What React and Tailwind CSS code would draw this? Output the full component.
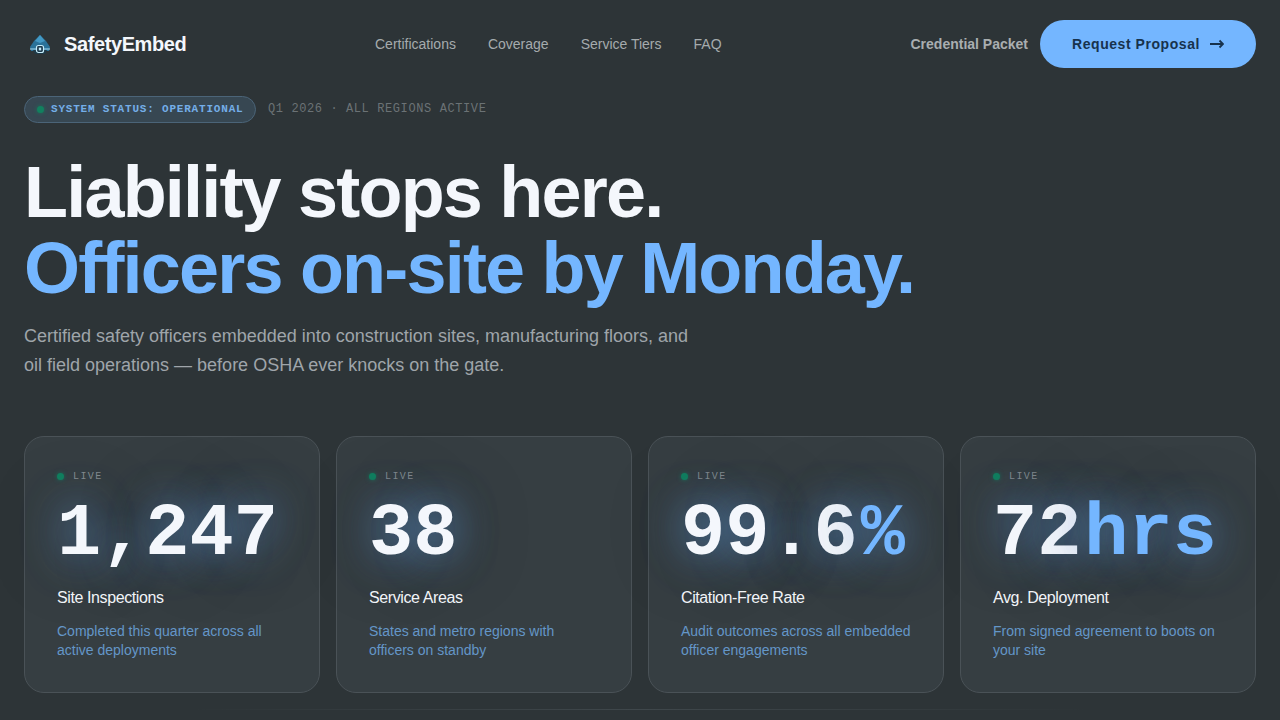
const sans = "font-['Liberation_Sans',Arial,sans-serif]";
const mono = "font-['Liberation_Mono','Courier_New',monospace]";

const navLinks = ['Certifications', 'Coverage', 'Service Tiers', 'FAQ'];

const stats = [
  { value: '1,247', label: 'Site Inspections', desc: 'Completed this quarter across all active deployments' },
  { value: '38', label: 'Service Areas', desc: 'States and metro regions with officers on standby' },
  { value: '99.6', unit: '%', label: 'Citation-Free Rate', desc: 'Audit outcomes across all embedded officer engagements' },
  { value: '72', unit: 'hrs', label: 'Avg. Deployment', desc: 'From signed agreement to boots on your site' },
];

function Logo() {
  return (
    <svg width="24" height="24" viewBox="0 0 24 24" className="shrink-0">
      <path d="M12 3 L18 9 L22 15 L21 19 H3 L2 15 L6 9 Z" fill="#2a7299" />
      <path d="M12 3 L17 9 L12 11 L7 9 Z" fill="#4298c4" />
      <path d="M5 18 H19 L17 22 H7 Z" fill="#1f3a48" />
      <path d="M2 17 H8 M16 17 H22" stroke="#a9dcf2" strokeWidth="1" />
      <rect x="8.5" y="13.5" width="7" height="7" rx="2" fill="#1d3a4d" stroke="#c4ecfb" strokeWidth="1.2" />
      <rect x="10.8" y="15.6" width="2.4" height="2.8" fill="#c4ecfb" />
    </svg>
  );
}

function StatCard({ stat }) {
  return (
    <div className="h-[257px] rounded-[20px] border border-[#4a5257] bg-[#363e42] px-8 pt-[32px]">
      <div className="flex h-[14px] items-center gap-[9px]">
        <span className="mt-px h-[7px] w-[7px] rounded-full bg-[#12805f] shadow-[0_0_4px_rgba(18,128,95,0.8)]" />
        <span className={`${mono} text-[10px] tracking-[1.4px] text-[#858c8f]`}>LIVE</span>
      </div>
      <div className={`${mono} mt-[12px] whitespace-nowrap text-[73.6px] leading-[80px] font-bold text-[#f4f7fc] [text-shadow:0_0_40px_rgba(116,182,255,0.5),0_0_50px_rgba(90,160,240,0.3),0_0_80px_rgba(20,28,34,0.45)]`}>
        {stat.value}
        {stat.unit && <span className="ml-[3px] text-[#74b6ff]">{stat.unit}</span>}
      </div>
      <div className={`${sans} mt-[11px] text-base leading-6 tracking-[-0.4px] text-[#f1f4f8]`}>{stat.label}</div>
      <p className={`${sans} mt-[12px] text-sm leading-[19px] text-[#6496c8]`}>{stat.desc}</p>
    </div>
  );
}

export default function App() {
  return (
    <div className={`${sans} h-[720px] w-[1280px] overflow-hidden bg-[#2d3437] px-6`}>
      <header className="relative flex h-[88px] items-center justify-between">
        <div className="flex items-center gap-3">
          <div className="ml-1 flex"><Logo /></div>
          <span className="text-xl font-bold tracking-[-0.4px] text-[#f4f7fc]">SafetyEmbed</span>
        </div>
        <nav className="absolute left-[351px] flex gap-8">
          {navLinks.map((l) => (
            <a key={l} className="text-sm text-[#a5abad]">{l}</a>
          ))}
        </nav>
        <div className="flex items-center gap-3">
          <a className="text-sm font-bold text-[#a9aeb0]">Credential Packet</a>
          <button className="flex h-12 w-[216px] items-center justify-center gap-[10px] rounded-full bg-[#74b6ff] text-sm font-bold tracking-[0.56px] text-[#17324d]">
            Request Proposal
            <svg width="14" height="14" viewBox="0 0 14 14" fill="none" stroke="currentColor" strokeWidth="1.8">
              <path d="M0 7 H13 M9.5 3.5 L13 7 L9.5 10.5" />
            </svg>
          </button>
        </div>
      </header>

      <div className="mt-2 flex items-center gap-3">
        <div className="flex h-[27px] w-[232px] items-center gap-[7px] rounded-full border border-[#4b6478] bg-[#374752] pl-3">
          <span className="h-[7px] w-[7px] rounded-full bg-[#12805f] shadow-[0_0_4px_rgba(18,128,95,0.8)]" />
          <span className={`${mono} text-[11px] font-bold tracking-[0.8px] text-[#74aee8]`}>SYSTEM STATUS: OPERATIONAL</span>
        </div>
        <span className={`${mono} pb-[2px] text-xs tracking-[0.05em] text-[#6b7275]`}>Q1 2026 · ALL REGIONS ACTIVE</span>
      </div>

      <h1 className="mt-[31px] text-[72px] leading-[76px] font-bold tracking-[-1.8px] text-[#f4f7fc]">
        Liability stops here.
        <br />
        <span className="text-[#74b6ff]">Officers on-site by Monday.</span>
      </h1>

      <p className="mt-[16px] text-lg leading-[29px] text-[#9fa5aa]">
        Certified safety officers embedded into construction sites, manufacturing floors, and
        <br />
        oil field operations — before OSHA ever knocks on the gate.
      </p>

      <div className="mt-[56px] grid grid-cols-4 gap-4">
        {stats.map((s) => (
          <StatCard key={s.label} stat={s} />
        ))}
      </div>

      <div className="mx-auto mt-4 h-px w-[900px] bg-gradient-to-r from-transparent via-[#3f474b] to-transparent" />
    </div>
  );
}
